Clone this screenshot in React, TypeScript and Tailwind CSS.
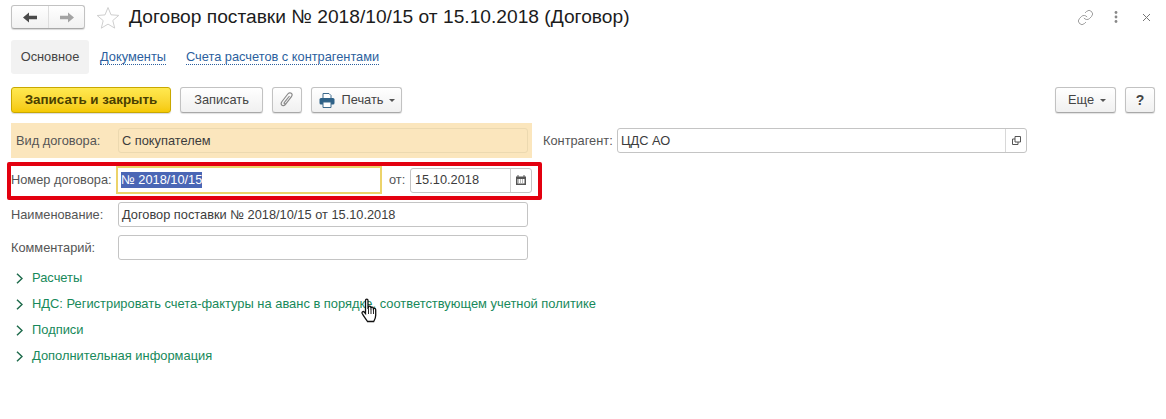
import { Link } from 'lucide-react';

const btn =
  'h-[26px] flex items-center justify-center rounded-[3px] border border-[#c2c2c2] border-b-[#a8a8a8] bg-gradient-to-b from-white to-[#f0f0f0] shadow-[0_1px_1px_rgba(0,0,0,0.12)] text-[12.8px] text-[#444]';

const field = 'h-[25px] flex items-center rounded-[3px] border border-[#c4c4c4] text-[12.8px] text-[#3c3c3c]';

const groups = [
  'Расчеты',
  'НДС: Регистрировать счета-фактуры на аванс в порядке, соответствующем учетной политике',
  'Подписи',
  'Дополнительная информация',
];

function Caret() {
  return <span className="ml-[6px] inline-block h-0 w-0 border-x-[3px] border-t-[3px] border-x-transparent border-t-[#555]" />;
}

function Arrow({ dir, color }: { dir: 'left' | 'right'; color: string }) {
  return (
    <svg width="14" height="11" viewBox="0 0 14 11" className={dir === 'right' ? 'rotate-180' : ''}>
      <path d="M0 5.500 6 .500v3.200h8v3.600H6v3.200z" fill={color} />
    </svg>
  );
}

export default function App() {
  return (
    <div className="relative h-[419px] w-[1166px] overflow-hidden bg-white font-['Liberation_Sans',sans-serif]">
      {/* Header */}
      <div className="flex h-[34px] items-center pl-[11px] pr-[10px]">
        <div className="flex h-[24px] w-[74px] items-center rounded-[3px] border border-[#c2c2c2] border-b-[#a8a8a8] bg-gradient-to-b from-white to-[#f1f1f1] shadow-[0_1px_1px_rgba(0,0,0,0.15)]">
          <div className="flex h-full w-[37px] items-center justify-center border-r border-[#dedede]">
            <Arrow dir="left" color="#4a4a4a" />
          </div>
          <div className="flex h-full flex-1 items-center justify-center">
            <Arrow dir="right" color="#a3a3a3" />
          </div>
        </div>
        <svg width="24" height="23" viewBox="0 0 24 23" className="ml-[11px]">
          <path
            d="M12 1.5l3 7.3 7.8.6-6 5.1 1.9 7.6L12 18.1 5.3 22.200l1.900-7.600-6-5.100 7.800-.6z"
            fill="none"
            stroke="#cfcfcf"
            strokeWidth="1"
          />
        </svg>
        <h1 className="ml-[9px] text-[19.2px] leading-none text-[#1c1c1c]">
          Договор поставки № 2018/10/15 от 15.10.2018 (Договор)
        </h1>
        <div className="ml-auto flex items-center">
          <Link size={17} strokeWidth={1} className="text-[#777]" />
          <svg width="4" height="12" viewBox="0 0 4 12" className="ml-[20px]">
            <circle cx="2" cy="1.500" r="1.400" fill="#888" />
            <circle cx="2" cy="6" r="1.400" fill="#888" />
            <circle cx="2" cy="10.500" r="1.400" fill="#888" />
          </svg>
          <svg width="9" height="9" viewBox="0 0 9 9" className="ml-[24px] mr-[5px]">
            <path d="M1 1l7 7M8 1 1 8" stroke="#777" strokeWidth="1" />
          </svg>
        </div>
      </div>

      {/* Tabs */}
      <div className="ml-[11px] mt-[6px] flex h-[34px] items-center text-[12.8px]">
        <div className="flex h-full w-[78px] items-center justify-center rounded-[3px] bg-[#f2f2f2] text-[#444]">
          Основное
        </div>
        <span className="ml-[11px] border-b border-dotted border-[#2c5f9e] leading-[14px] text-[#2c5f9e]">Документы</span>
        <span className="ml-[20px] border-b border-dotted border-[#2c5f9e] leading-[14px] text-[#2c5f9e]">
          Счета расчетов с контрагентами
        </span>
      </div>

      {/* Command bar */}
      <div className="mt-[13px] flex items-center pl-[11px] pr-[11px]">
        <div className="flex h-[26px] w-[160px] items-center justify-center rounded-[3px] border border-[#c9a800] bg-gradient-to-b from-[#ffe94f] to-[#f5c900] text-[13.4px] font-bold text-[#4a3f00] shadow-[0_1px_1px_rgba(0,0,0,0.15)]">
          Записать и закрыть
        </div>
        <div className={`${btn} ml-[9px] w-[83px]`}>Записать</div>
        <div className={`${btn} ml-[9px] w-[30px]`}>
          <svg width="14" height="16" viewBox="0 0 14 16">
            <path
              d="M11 5 5.500 12.500c-1 1.300-3 1.500-3.800.5-.8-.9-.6-2.300.3-3.500L7.800 2c1-1.300 2.600-1.500 3.500-.7 1 .8 1 2.200 0 3.500L6 11.500c-.5.600-1.200.7-1.600.3-.4-.4-.3-1 .2-1.600L9.500 4"
              fill="none"
              stroke="#8a8a8a"
              strokeWidth="1.200"
            />
          </svg>
        </div>
        <div className={`${btn} ml-[9px] w-[91px]`}>
          <svg width="16" height="15" viewBox="0 0 16 15" className="ml-[1px] mr-[7px]">
            <path d="M4 .500h6l2 2v3.500H4z" fill="#fff" stroke="#3d6a8c" />
            <rect x="0.500" y="5" width="15" height="6.500" rx="1.500" fill="#2f6288" />
            <path d="M4 9h8v5.500H4z" fill="#fff" stroke="#3d6a8c" />
          </svg>
          Печать
          <Caret />
        </div>
        <div className="ml-auto flex">
          <div className={`${btn} w-[61px] pl-[3px]`}>
            Еще
            <Caret />
          </div>
          <div className={`${btn} ml-[9px] w-[30px] text-[14px] font-bold`}>?</div>
        </div>
      </div>

      {/* Form */}
      <div className="mt-[10px] flex items-center">
        <div className="ml-[11px] flex h-[35px] w-[521px] items-center bg-[#fbe6bd]">
          <span className="w-[107px] pl-[5px] text-[12.8px] text-[#555]">Вид договора:</span>
          <div className={`${field} w-[410px] border-[#ecd9b0] pl-[3px]`}>С покупателем</div>
        </div>
        <span className="ml-[11px] w-[74px] text-[12.8px] text-[#555]">Контрагент:</span>
        <div className={`${field} w-[410px] justify-between pl-[3px]`}>
          ЦДС АО
          <div className="flex h-full w-[21px] items-center justify-center border-l border-[#d8d8d8]">
            <svg width="9" height="9" viewBox="0 0 9 9">
              <path d="M3 .500h5.500V6H3zM.500 3H3M.500 3v5.500H6V6" fill="none" stroke="#555" />
            </svg>
          </div>
        </div>
      </div>

      <div className="ml-[7px] mt-[4px] flex h-[38px] w-[535px] items-center rounded-[2px] border-[4px] border-[#e3000f] pb-[2px]">
        <span className="w-[105px] whitespace-nowrap text-[12.8px] text-[#555]">Номер договора:</span>
        <div className="flex h-[28px] w-[266px] items-center border-2 border-[#ecd36a] text-[12.8px]">
          <span className="ml-[3px] bg-[#4a66b5] leading-[16px] text-white">№ 2018/10/15</span>
        </div>
        <span className="ml-[7px] w-[21px] text-[12.8px] text-[#555]">от:</span>
        <div className={`${field} w-[122px] justify-between pl-[4px]`}>
          15.10.2018
          <div className="flex h-full w-[21px] items-center justify-center border-l border-[#d0d0d0]">
            <svg width="10" height="10" viewBox="0 0 10 10">
              <path d="M0 1.500h10V10H0z" fill="#555" />
              <path d="M2 0v2M8 0v2" stroke="#555" />
              <path d="M1.500 4h7v4.500h-7z" fill="#fff" />
              <path d="M2 5h6M2 7h6" stroke="#777" strokeDasharray="1 1" />
            </svg>
          </div>
        </div>
      </div>

      <div className="ml-[11px] mt-[2px] flex items-center">
        <span className="w-[107px] text-[12.8px] text-[#555]">Наименование:</span>
        <div className={`${field} w-[410px] pl-[3px]`}>Договор поставки № 2018/10/15 от 15.10.2018</div>
      </div>
      <div className="ml-[11px] mt-[8px] flex items-center">
        <span className="w-[107px] text-[12.8px] text-[#555]">Комментарий:</span>
        <div className={`${field} w-[410px]`} />
      </div>

      {/* Collapsed groups */}
      <div className="ml-[16px] mt-[5px] flex flex-col">
        {groups.map((group) => (
          <div key={group} className="flex h-[26px] items-center text-[12.9px] text-[#17895a]">
            <svg width="7" height="11" viewBox="0 0 7 11" className="mr-[9px]">
              <path d="M1 .800 6 5.500 1 10.200" fill="none" stroke="#1f6b4c" strokeWidth="1.500" />
            </svg>
            {group}
          </div>
        ))}
      </div>

      {/* Mouse pointer */}
      <svg width="18" height="26" viewBox="0 0 18 26" className="absolute left-[361px] top-[298px]">
        <path
          d="M4.500 2.500c0-1.800 2.500-1.800 2.500 0V11l.5-2c.5-1.300 2.300-1 2.300.3l.2.700c.5-1.200 2.200-1 2.300.3l.1.700c.7-1 2.300-.6 2.300.7v5.500c0 3-1.500 5-2 6.300H6.500C5 21 2.500 18 1.200 15.500c-.7-1.500 1-2.600 2-1.500l1.300 1.500z"
          fill="#fff"
          stroke="#111"
          strokeWidth="1.300"
        />
        <path d="M7.500 11v5M10 11v5M12.500 11v5" stroke="#111" strokeWidth="0.900" />
      </svg>
    </div>
  );
}
